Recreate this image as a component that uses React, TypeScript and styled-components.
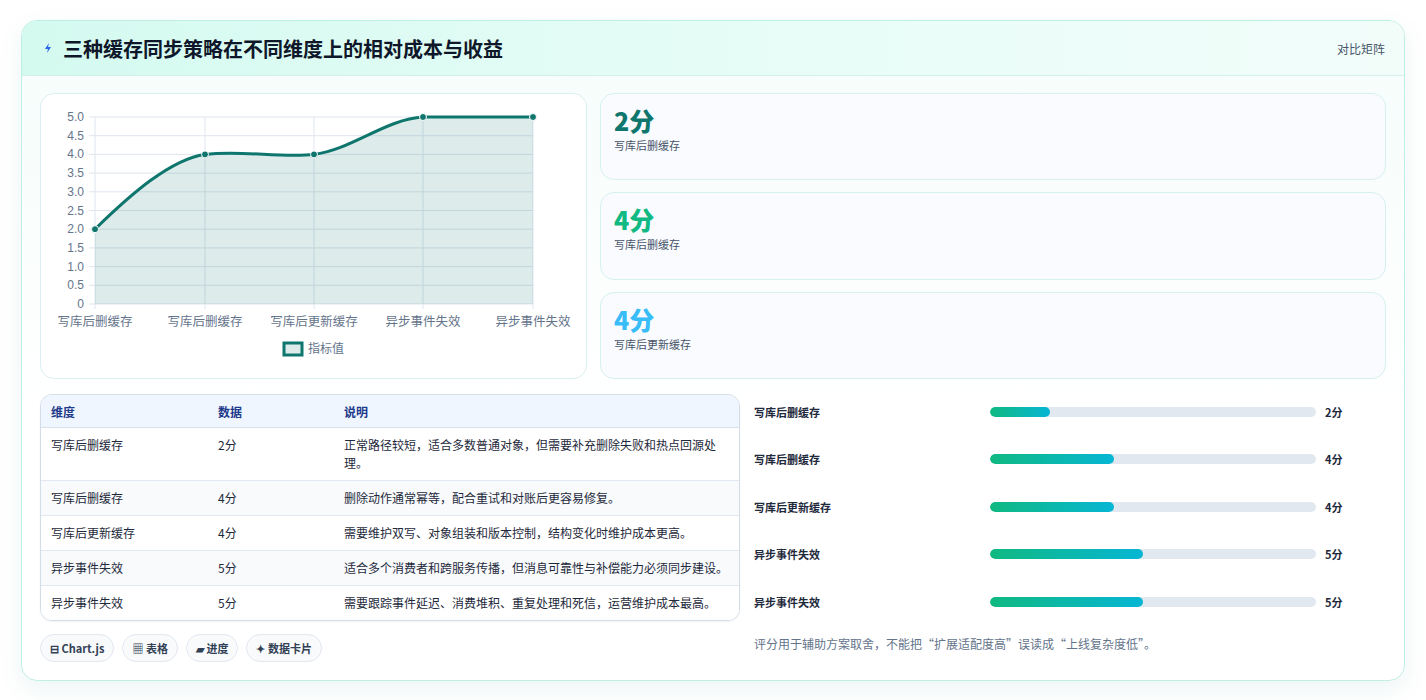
import React from 'react';
import styled, { createGlobalStyle } from 'styled-components';

const Global = createGlobalStyle`
  body {
    margin: 0;
    background: #ffffff;
    font-family: 'Noto Sans CJK SC', 'Noto Sans', sans-serif;
    color: #1e293b;
  }
`;

const Page = styled.div`
  padding: 20px 21px 20px 21px;
`;

const Card = styled.div`
  border: 1px solid #bfeee3;
  border-radius: 16px;
  overflow: hidden;
  background: linear-gradient(180deg, #f5fdfb 0%, #ffffff 60%);
  box-shadow: 0 8px 24px rgba(15, 118, 110, 0.08);
`;

const Header = styled.div`
  height: 54px;
  display: flex;
  align-items: center;
  justify-content: space-between;
  padding: 0 19px 0 20px;
  background: linear-gradient(90deg, #d4faf0 0%, #e9fdf8 60%, #f2fdfa 100%);
  border-bottom: 1px solid #d3efe9;
`;

const Title = styled.h1`
  margin: 0;
  font-size: 20px;
  font-weight: 700;
  color: #0f172a;
  display: flex;
  align-items: center;
  gap: 9px;
`;

const HeaderTag = styled.span`
  font-size: 12px;
  color: #475569;
`;

const Body = styled.div`
  padding: 17px 18px 18px 18px;
  display: flex;
  flex-direction: column;
  gap: 15px;
`;

const TopRow = styled.div`
  display: grid;
  grid-template-columns: 547px 1fr;
  gap: 13px;
`;

const ChartCard = styled.div`
  height: 284px;
  border: 1px solid #dbeef0;
  border-radius: 14px;
  background: #fff;
`;

const StatCol = styled.div`
  display: flex;
  flex-direction: column;
  gap: 12px;
`;

const Stat = styled.div`
  flex: 1;
  border: 1px solid #d6f0ee;
  border-radius: 14px;
  background: #fafbff;
  padding: 9px 13px;
`;

const StatValue = styled.div<{ $c: string }>`
  font-size: 25px;
  font-weight: 800;
  line-height: 34px;
  color: ${(p) => p.$c};
`;

const StatLabel = styled.div`
  font-size: 11px;
  color: #475569;
`;

const BottomRow = styled.div`
  display: grid;
  grid-template-columns: 700px 1fr;
  gap: 14px;
`;

const Table = styled.table`
  width: 100%;
  border-collapse: separate;
  border-spacing: 0;
  border: 1px solid #d3dde8;
  border-radius: 12px;
  overflow: hidden;
  font-size: 12px;
  box-shadow: 0 1px 2px rgba(0, 0, 0, 0.05);
`;

const Th = styled.th`
  text-align: left;
  font-weight: 700;
  color: #1e3a8a;
  background: #eff6ff;
  height: 32px;
  padding: 0 10px;
  border-bottom: 1px solid #d7e1ec;
`;

const Tr = styled.tr<{ $alt: boolean }>`
  background: ${(p) => (p.$alt ? '#f8fafc' : '#ffffff')};
`;

const Td = styled.td<{ $last: boolean }>`
  padding: 8px 10px;
  height: 18px;
  vertical-align: top;
  line-height: 18px;
  color: #1e293b;
  border-bottom: ${(p) => (p.$last ? 'none' : '1px solid #e2e8f0')};
`;

const Chips = styled.div`
  display: flex;
  gap: 8px;
  margin-top: 13px;
`;

const Chip = styled.span`
  height: 26px;
  padding: 0 9px;
  display: inline-flex;
  align-items: center;
  gap: 4px;
  border: 1px solid #e2e8f0;
  border-radius: 14px;
  background: #f8fafc;
  font-size: 11px;
  font-weight: 700;
  color: #334155;
`;

const Bars = styled.div`
  display: flex;
  flex-direction: column;
  padding-top: 10px;
`;

const BarRow = styled.div`
  height: 47.4px;
  display: grid;
  grid-template-columns: 236px 326px 1fr;
  align-items: start;
  font-size: 11px;
  font-weight: 700;
`;

const Track = styled.div`
  height: 10px;
  margin-top: 3px;
  background: #e2e8f0;
  border-radius: 5px;
  overflow: hidden;
`;

const Fill = styled.div`
  height: 100%;
  border-radius: 5px;
  background: linear-gradient(90deg, #10b981, #06b6d4);
`;

const Score = styled.span`
  padding-left: 9px;
`;

const Note = styled.div`
  margin-top: -6px;
  font-size: 12px;
  color: #64748b;
`;

const rows = [
  { name: '写库后删缓存', v: 2, note: '正常路径较短，适合多数普通对象，但需要补充删除失败和热点回源处理。', w: 18.5 },
  { name: '写库后删缓存', v: 4, note: '删除动作通常幂等，配合重试和对账后更容易修复。', w: 38 },
  { name: '写库后更新缓存', v: 4, note: '需要维护双写、对象组装和版本控制，结构变化时维护成本更高。', w: 38 },
  { name: '异步事件失效', v: 5, note: '适合多个消费者和跨服务传播，但消息可靠性与补偿能力必须同步建设。', w: 47 },
  { name: '异步事件失效', v: 5, note: '需要跟踪事件延迟、消费堆积、重复处理和死信，运营维护成本最高。', w: 47 },
];

const xs = [54, 164, 273, 382, 492];
const yOf = (v: number) => 210 - v * 37.4;

const Chart = () => (
  <svg width="547" height="284" viewBox="0 0 547 284">
    {Array.from({ length: 11 }).map((_, i) => {
      const v = i * 0.5;
      const y = yOf(v);
      return (
        <g key={i}>
          <line x1={48} x2={492} y1={y} y2={y} stroke="#dfe5ee" />
          <text x={43} y={y + 4} textAnchor="end" fontSize="12" fill="#64748b" fontFamily="Liberation Sans, sans-serif">
            {i === 0 ? '0' : v.toFixed(1)}
          </text>
        </g>
      );
    })}
    {xs.map((x, i) => (
      <line key={i} x1={x} x2={x} y1={23} y2={215} stroke="#dfe5ee" />
    ))}
    <path
      d="M54,135.2 C90,100 130,65 164,60.4 C200,56 240,64 273,60.4 C310,56 345,25 382,23 L492,23 L492,210 L54,210 Z"
      fill="rgba(15,118,110,0.14)"
    />
    <path
      d="M54,135.2 C90,100 130,65 164,60.4 C200,56 240,64 273,60.4 C310,56 345,25 382,23 L492,23"
      fill="none"
      stroke="#0f766e"
      strokeWidth="3"
    />
    {[2, 4, 4, 5, 5].map((v, i) => (
      <circle key={i} cx={xs[i]} cy={yOf(v)} r={3.5} fill="#0f766e" stroke="#fff" strokeWidth="1" />
    ))}
    {rows.map((r, i) => (
      <text key={i} x={xs[i]} y={232} textAnchor="middle" fontSize="12.5" fill="#64748b">
        {r.name}
      </text>
    ))}
    <rect x={243} y={249} width={18} height={12} fill="rgba(15,118,110,0.14)" stroke="#0f766e" strokeWidth="3" />
    <text x={267} y={259} fontSize="12" fill="#64748b">指标值</text>
  </svg>
);

export default function App() {
  return (
    <Page>
      <Global />
      <Card>
        <Header>
          <Title>
            <svg width="12" height="12" viewBox="0 0 12 12">
              <path d="M7 1 L3 7 H6 L5 11 L9 5 H6 Z" fill="#2563eb" />
            </svg>
            三种缓存同步策略在不同维度上的相对成本与收益
          </Title>
          <HeaderTag>对比矩阵</HeaderTag>
        </Header>
        <Body>
          <TopRow>
            <ChartCard>
              <Chart />
            </ChartCard>
            <StatCol>
              <Stat>
                <StatValue $c="#0f766e">2分</StatValue>
                <StatLabel>写库后删缓存</StatLabel>
              </Stat>
              <Stat>
                <StatValue $c="#10b981">4分</StatValue>
                <StatLabel>写库后删缓存</StatLabel>
              </Stat>
              <Stat>
                <StatValue $c="#38bdf8">4分</StatValue>
                <StatLabel>写库后更新缓存</StatLabel>
              </Stat>
            </StatCol>
          </TopRow>
          <BottomRow>
            <div>
              <Table>
                <thead>
                  <tr>
                    <Th style={{ width: 147 }}>维度</Th>
                    <Th style={{ width: 106 }}>数据</Th>
                    <Th>说明</Th>
                  </tr>
                </thead>
                <tbody>
                  {rows.map((r, i) => (
                    <Tr key={i} $alt={i % 2 === 1}>
                      <Td $last={i === 4}>{r.name}</Td>
                      <Td $last={i === 4}>{r.v}分</Td>
                      <Td $last={i === 4}>{r.note}</Td>
                    </Tr>
                  ))}
                </tbody>
              </Table>
              <Chips>
                <Chip>⊟ Chart.js</Chip>
                <Chip>▦ 表格</Chip>
                <Chip>▰ 进度</Chip>
                <Chip>✦ 数据卡片</Chip>
              </Chips>
            </div>
            <Bars>
              {rows.map((r, i) => (
                <BarRow key={i}>
                  <span>{r.name}</span>
                  <Track>
                    <Fill style={{ width: `${r.w}%` }} />
                  </Track>
                  <Score>{r.v}分</Score>
                </BarRow>
              ))}
              <Note>评分用于辅助方案取舍，不能把“扩展适配度高”误读成“上线复杂度低”。</Note>
            </Bars>
          </BottomRow>
        </Body>
      </Card>
    </Page>
  );
}
